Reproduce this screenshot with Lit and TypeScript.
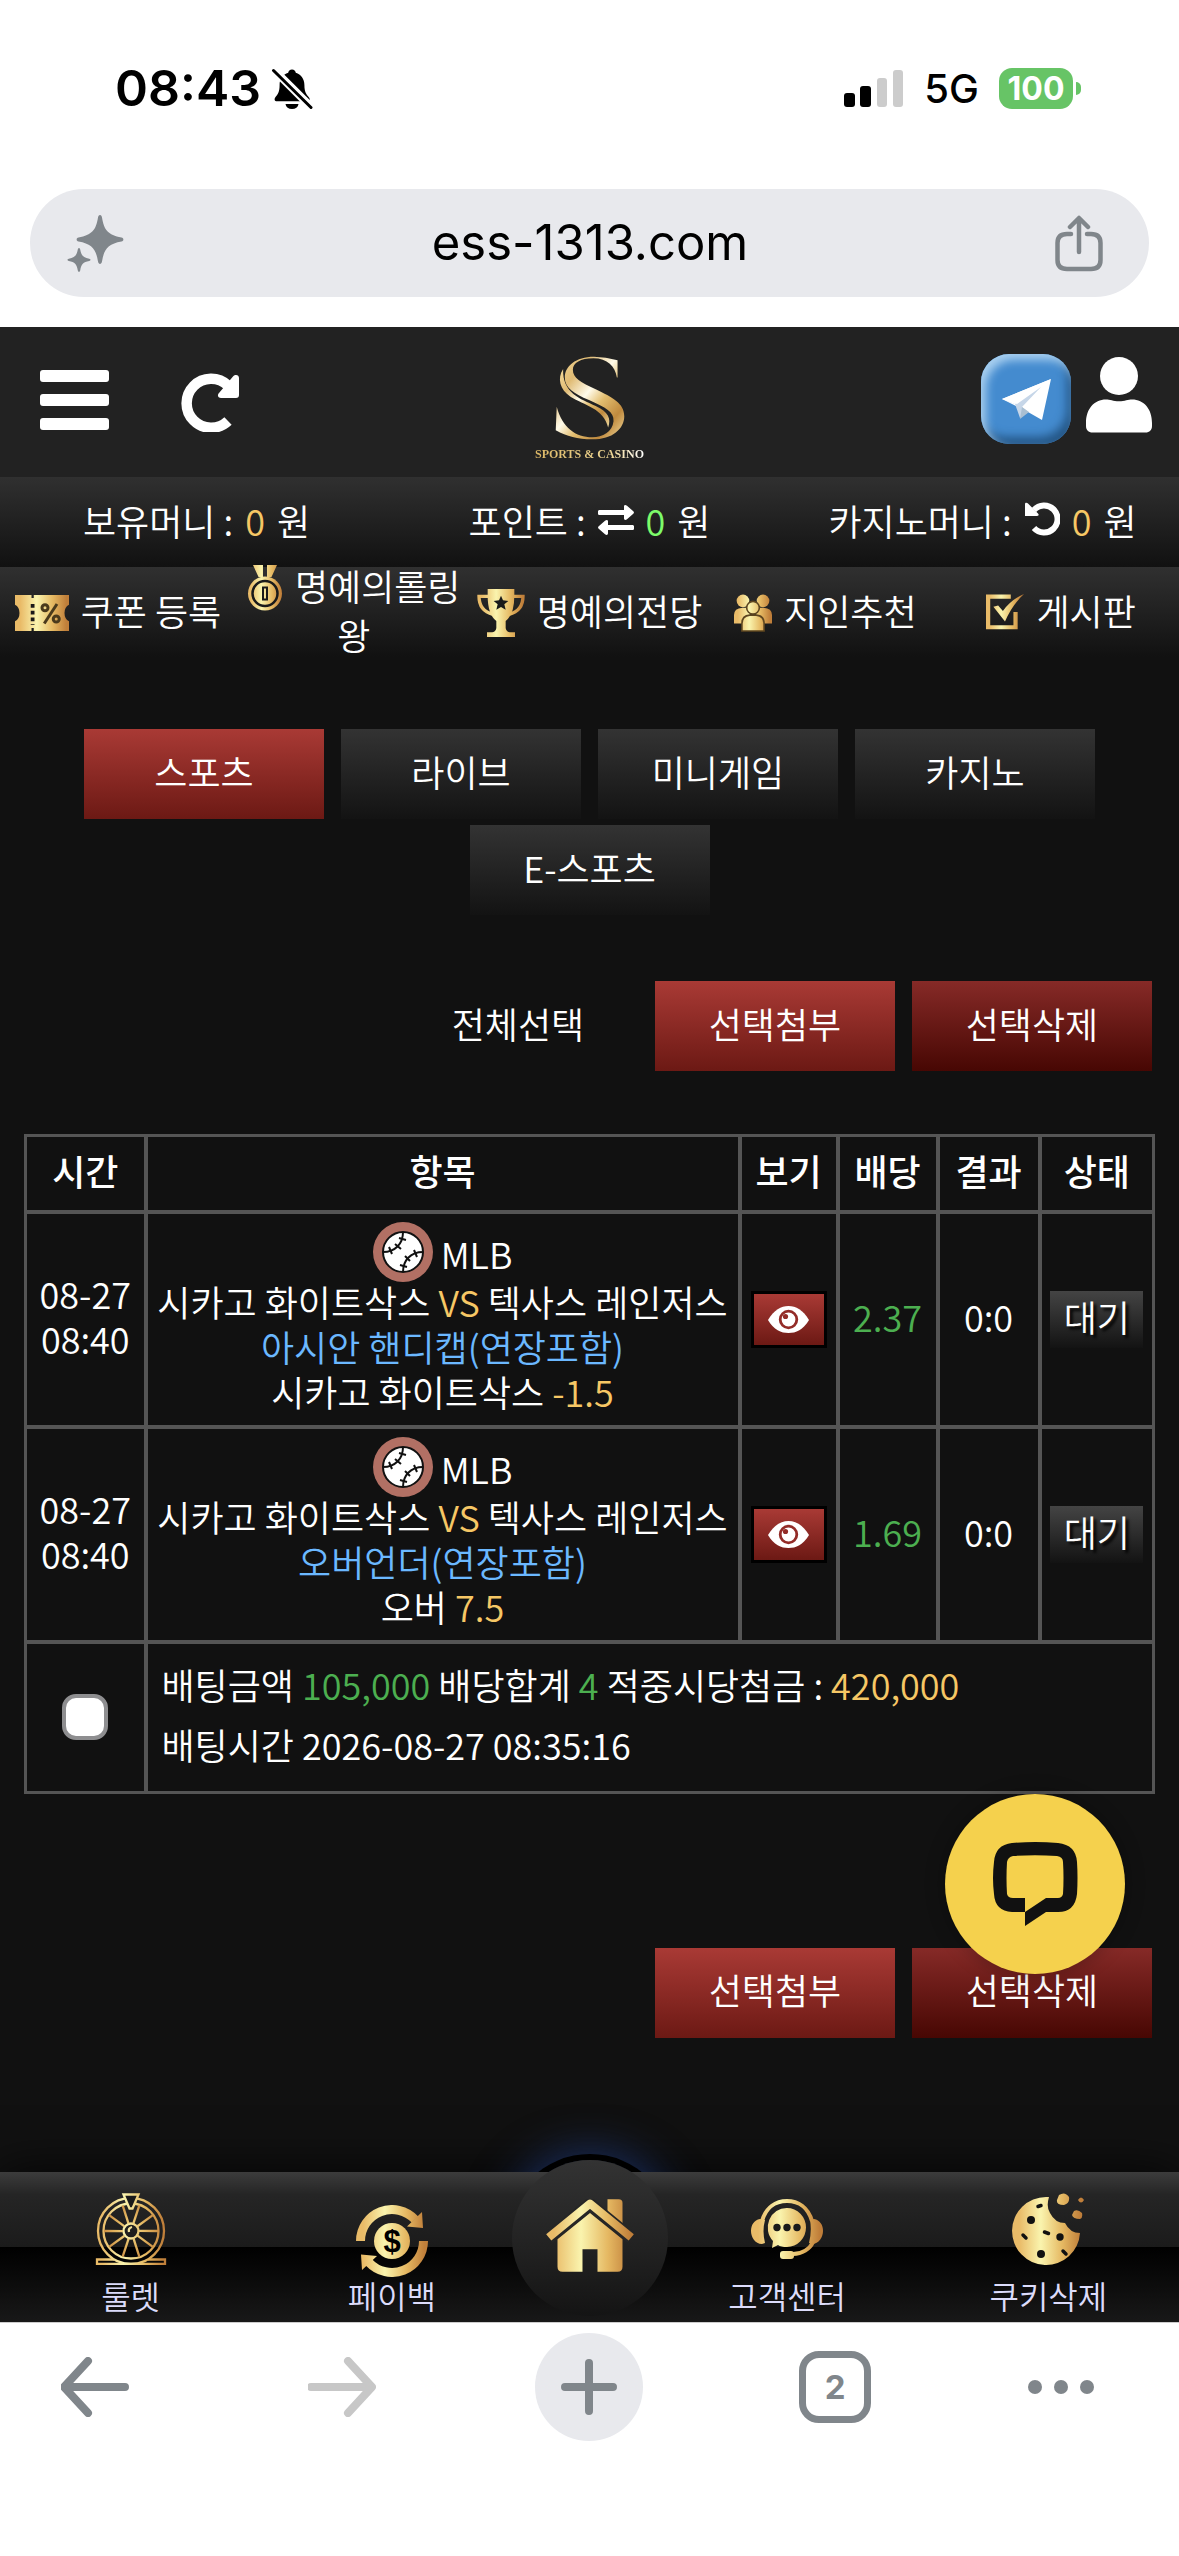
import { LitElement, html, svg, css } from "lit";
import { customElement, state } from "lit/decorators.js";
import { classMap } from "lit/directives/class-map.js";

const DARK = "#1a1a1a";

const icons = {
  bellOff: svg`
    <path d="M21 2.500c2.200 0 3.500 1.500 3.800 3.300 5.200 1.700 8.600 6.200 8.600 12.200 0 7 2 9.500 4.600 12.400.8 1 1 2.300.2 3.100-.4.500-1 .8-2 .8H5.800c-1.900 0-2.900-2-1.600-3.900 2.600-2.900 4.400-5.400 4.400-12.400 0-6 3.400-10.500 8.600-12.200.3-1.800 1.600-3.300 3.800-3.300z"/>
    <path d="M14.500 37h13c-.5 3.200-3 5-6.500 5s-6-1.800-6.500-5z"/>
    <path d="M3.500 3.500l36 36" stroke="#fff" stroke-width="8"/>
    <path d="M2.500 3.500l37.500 37" stroke="#000" stroke-width="3" stroke-linecap="round"/>`,
  sparkle: svg`
    <path d="M33 1c1.200 0 1.700 1 2 2.500 2 12.500 6 17.500 19.500 20 2.500.5 2.500 3.500 0 4-13.500 2.500-17.500 7.500-19.500 20-.5 3.300-3.500 3.300-4 0-2-12.500-6-17.500-19.500-20-2.500-.5-2.500-3.500 0-4 13.500-2.500 17.500-7.500 19.500-20 .3-1.500.8-2.500 2-2.500z"/>
    <path d="M12 34c.8 0 1 .8 1.200 1.500 1 6 3 8 9 9.200 1.800.4 1.800 1.900 0 2.300-6 1.200-8 3.200-9 9.500-.4 1.900-2 1.900-2.400 0-1-6.300-3-8.300-9-9.500-1.800-.4-1.800-1.900 0-2.300 6-1.200 8-3.200 9-9.200.2-.7.4-1.500 1.200-1.500z"/>`,
  share: svg`
    <path d="M16 19h-4c-6 0-9.500 3-9.500 9v17c0 6 3.500 9 9.500 9h24c6 0 9.500-3 9.500-9V28c0-6-3.500-9-9.500-9h-4M24 37V4M15 12l9-9 9 9"
      fill="none" stroke-width="4.500" stroke-linecap="round" stroke-linejoin="round"/>`,
  bars: svg`
    <rect width="69" height="12" y="0" rx="3"/>
    <rect width="69" height="12" y="24" rx="3"/>
    <rect width="69" height="12" y="48" rx="3"/>`,
  redo: svg`
    <path d="M47 49A24.500 24.500 0 1 1 47 13.500" fill="none" stroke="#fff" stroke-width="10.500"/>
    <path d="M58 6v17c0 2-1 3-3 3H40c-3 0-4-3-2-5L52 4.500c2.500-2.500 6-1.500 6 1.500z"/>`,
  undo: svg`
    <path d="M10 26A13.500 13.500 0 1 0 10 8" fill="none" stroke="#fff" stroke-width="6"/>
    <path d="M1 2v12h12c2 0 2-1.500 1-2.500L4 1.500C3 .5 1 .5 1 2z"/>`,
  exchange: svg`
    <path d="M2 6h24V2.500c0-2 1.500-2 3-.8l6 5.300c1.300 1.200 1.300 1.800 0 3l-6 5.200c-1.500 1.200-3 .8-3-1V11H2C.5 11 0 10.500 0 9.500v-2C0 6.500.5 6 2 6z"/>
    <path d="M34 21H10v-3.500c0-2-1.500-2-3-.8L1 22c-1.300 1.200-1.300 1.800 0 3l6 5.200c1.500 1.200 3 .8 3-1V26h24c1.500 0 2-.5 2-1.500v-2c0-1-.5-1.500-2-1.500z"/>`,
  user: svg`
    <circle cx="33" cy="19" r="19"/>
    <path d="M0 66c0-14 8-23.500 20-23.500 4 0 7 1.700 13 1.700s9-1.700 13-1.700c12 0 20 9.500 20 23.500v3c0 4-2.500 6.500-6.500 6.500h-53C2.500 75.500 0 73 0 69z"/>`,
  plane: svg`
    <path d="M1 20L50 0 41 41 27 33z" fill="#fff"/>
    <path d="M1 20L14 25 19 39 27 33 21 28 40 8 16 25z" fill="#c6d6e8"/>
    <path d="M1 20L50 0 14 25z" fill="#fff"/>
    <path d="M19 40l2-12 7 5z" fill="#a9bfd2"/>`,
  eye: svg`
    <path d="M0 14C6 4 13 0 20.500 0S35 4 41 14C35 24 28 27 20.500 27S6 24 0 14z" fill="#fff"/>
    <circle cx="20.500" cy="13.500" r="8.300" fill="none" stroke="#932c28" stroke-width="2.800"/>
    <circle cx="17.500" cy="10.500" r="2.600" fill="#932c28"/>`,
  baseball: svg`
    <circle cx="30" cy="30" r="30" fill="#b27064"/>
    <circle cx="30" cy="30" r="20" fill="#fff" stroke="#111" stroke-width="2"/>
    <g fill="none" stroke="#111" stroke-width="2">
      <path d="M30 10C30 22 22 30 10 30M50 30C38 30 30 38 30 50"/>
      <path d="M26 16l7 2M22 22l6 5M16 25l3 7M27 43l7 2M32 34l5 5M41 28l3 7"/>
    </g>`,
  chat: svg`
    <path fill-rule="evenodd" fill="#111" d="M19 1Q42 -1 65 1Q83 3 84 20Q85 36 84 52Q82 70 65 70H53L32 84V70H19Q2 69 1 52Q-1 36 1 20Q2 3 19 1zM20 14Q42 12.500 64 14Q70 15 70 20Q71 36 70 52Q69 56 65 56H53L32 70V56H20Q15 56 14 52Q13 36 14 20Q15 15 20 14z"/>`,
  back: svg`<path d="M64 30H4M27 4L3 30l24 26" fill="none" stroke-width="8" stroke-linecap="round" stroke-linejoin="round"/>`,
  forward: svg`<path d="M3 30h60M40 4l24 26-24 26" fill="none" stroke-width="8" stroke-linecap="round" stroke-linejoin="round"/>`,
  plus: svg`<path d="M28 4v48M4 28h48" fill="none" stroke-width="8" stroke-linecap="round"/>`,
  dots: svg`<circle cx="7" cy="7" r="7"/><circle cx="33" cy="7" r="7"/><circle cx="59" cy="7" r="7"/>`,
};

/* Gold artwork is always 72 units wide so that it can share one gradient. */
const gold = {
  ticket: svg`
    <path d="M0 0h22v4h3V0h47v13q-6 3-6 11t6 11v13H25v-4h-3v4H0V35q6-3 6-11T0 13z"/>
    <path d="M23.500 12v28" stroke="${DARK}" stroke-width="5" stroke-dasharray="5 4"/>
    <g fill="none" stroke="#4a3a1c" stroke-width="4"><circle cx="40" cy="17" r="4"/><circle cx="55" cy="32" r="4"/><path d="M56 12L39 38"/></g>`,
  medal: svg`
    <path d="M12 0h20v24h-9zM60 0H40v24h9z"/>
    <circle cx="36" cy="57" r="34"/>
    <circle cx="36" cy="57" r="25" fill="none" stroke="${DARK}" stroke-width="5"/>
    <path d="M32 45h8v24h-8z" fill="none" stroke="${DARK}" stroke-width="4"/>`,
  trophy: svg`
    <path d="M16 0h40v10q0 28-13 38v10q0 5 6 7h8v8H15v-8h8q6-2 6-7V48Q16 38 16 10z"/>
    <path d="M17 11H3q0 22 21 27M55 11h14q0 22-21 27" fill="none" stroke="url(#gold)" stroke-width="5"/>
    <path d="M36 10l3 7 8 1-6 5 2 8-7-4-7 4 2-8-6-5 8-1z" fill="${DARK}"/>`,
  people: svg`
    <circle cx="17" cy="13" r="12"/><circle cx="55" cy="13" r="12"/>
    <path d="M0 56V40q0-13 16-14l14 0v30zM72 56V40q0-13-16-14l-14 0v30z"/>
    <circle cx="36" cy="26" r="12" stroke="#5d451f" stroke-width="3"/>
    <path d="M15 70V56q0-15 15-16h12q15 1 15 16v14z" stroke="#5d451f" stroke-width="3"/>`,
  board: svg`
    <path d="M47 5H4v58h52V34" fill="none" stroke="url(#gold)" stroke-width="8"/>
    <path d="M14 24l9-2 9 10Q48 10 72 0 50 20 36 52z"/>`,
  wheel: svg`
    <g fill="none" stroke="url(#gold)" stroke-width="2.300">
      <circle cx="36" cy="38" r="33"/>
      <circle cx="36" cy="38" r="27.500"/>
      <circle cx="36" cy="38" r="7.500"/>
      <path d="M34 39q-1-4 3-5"/>
      ${[0, 36, 72, 108, 144, 180, 216, 252, 288, 324].map(
        deg => svg`<path d="M44 37.900L63 38" transform="rotate(${deg} 36 38)"/>`
      )}
      <path d="M19 66.500H2v4.500h68v-4.500H53"/>
      <path d="M28.500 1.500h15l-6 14h-3z" fill="${DARK}"/>
    </g>`,
  payback: svg`
    <g fill="none" stroke="url(#gold)" stroke-width="9">
      <path d="M4.500 36A31.500 31.500 0 0 1 59 14.500"/>
      <path d="M67.500 36A31.500 31.500 0 0 1 13 57.500"/>
    </g>
    <path d="M66 7l1 16-16-1.500zM6 65L5 49.500l16 1.500z"/>
    <circle cx="36" cy="36" r="18"/>
    <text x="36" y="47" text-anchor="middle" font-family="Liberation Sans" font-weight="700" font-size="31" fill="#000">$</text>`,
  home: svg`
    <path d="M50 0h9q3 0 3 3v20L50 13z"/>
    <path d="M3 31L36 4l33 27" fill="none" stroke="#262626" stroke-width="10"/>
    <path d="M10 32L36 11l26 21v22q0 4-4 4H42V40H30v18H14q-4 0-4-4z"/>
    <path d="M3 30.500L36 3.500l33 27" fill="none" stroke="url(#gold)" stroke-width="6.500" stroke-linejoin="round"/>`,
  support: svg`
    <path d="M11 22C15 8 25 2 36 2s21 6 25 20M62 43c-3 7-11 12-20 12" fill="none" stroke="url(#gold)" stroke-width="4"/>
    <path d="M9 20C3 21 0 26 0 32s4 13 11 13l3-1q-3-12 0-23zM63 20c6 1 9 6 9 12s-4 13-11 13l-3-1q3-12 1-23z"/>
    <path d="M36 9a19 19.500 0 0 1 0 39q-6 0-9-2l-6 3 1-7A19 19.500 0 0 1 36 9z"/>
    <rect x="29" y="52" width="14" height="8" rx="3"/>
    <g fill="${DARK}"><circle cx="26" cy="28.500" r="3.700"/><circle cx="36" cy="28.500" r="3.700"/><circle cx="46" cy="28.500" r="3.700"/></g>`,
  cookie: svg`
    <path d="M37 4Q34 14 38 20Q43 30 53 30Q58 40 68 40A34 34 0 1 1 34 4z"/>
    <path d="M47 2q6-4 10 2 1 6-5 8-8 0-7-5zM62 18q4-2 8 2 1 5-2 6-7 0-8-4zM66 7q3-5 6 0-3 5-6 0z"/>
    <g fill="#111"><circle cx="19" cy="27" r="4"/><circle cx="48" cy="44" r="3.700"/><circle cx="29" cy="61" r="4"/></g>
    <path d="M26 13.500l3-1M11 42l3 3M32.500 39l4 1.500M51 58l3 3" stroke="#111" stroke-width="3.500" stroke-linecap="round"/>`,
};

const icon = (name: keyof typeof icons, width: number, height: number) =>
  html`<svg class="icon" width=${width} height=${height} viewBox="0 0 ${width} ${height}" aria-hidden="true">${icons[name]}</svg>`;

const goldIcon = (name: keyof typeof gold, width: number, height: number) =>
  html`<svg class="gold" width=${width} height=${height} viewBox="0 0 72 ${Math.round((72 * height) / width)}" aria-hidden="true">${gold[name]}</svg>`;

const TABS = ["스포츠", "라이브", "미니게임", "카지노", "E-스포츠"];

const SHORTCUTS = [
  { label: "쿠폰 등록", icon: goldIcon("ticket", 54, 36) },
  { label: "명예의롤링왕", icon: goldIcon("medal", 36, 46) },
  { label: "명예의전당", icon: goldIcon("trophy", 48, 48) },
  { label: "지인추천", icon: goldIcon("people", 38, 38) },
  { label: "게시판", icon: goldIcon("board", 38, 38) },
];

const BETS = [
  { day: "08-27", time: "08:40", league: "MLB", home: "시카고 화이트삭스", away: "텍사스 레인저스", market: "아시안 핸디캡(연장포함)", pick: "시카고 화이트삭스", line: "-1.5", odds: "2.37", score: "0:0", status: "대기" },
  { day: "08-27", time: "08:40", league: "MLB", home: "시카고 화이트삭스", away: "텍사스 레인저스", market: "오버언더(연장포함)", pick: "오버", line: "7.5", odds: "1.69", score: "0:0", status: "대기" },
];

@customElement("app-root")
class AppRoot extends LitElement {
  @state() private tab = TABS[0];

  static styles = css`
    :host {
      display: flex;
      flex-direction: column;
      min-height: 100vh;
      background: #111;
      color: #fff;
      font-family: "Noto Sans CJK KR", sans-serif;
      font-size: 36px;
      font-weight: 350;
      line-height: 45px;
    }
    * { box-sizing: border-box; }
    svg { display: block; flex: none; }
    a { color: inherit; text-decoration: none; }
    button {
      display: flex;
      align-items: center;
      justify-content: center;
      padding: 0;
      border: 0;
      background: none;
      color: inherit;
      font: inherit;
      cursor: pointer;
    }
    .icon { fill: currentColor; stroke: none; }
    .gold { fill: url(#gold); }
    .defs { position: absolute; }
    .yellow { color: #f6c765; }
    .lime { color: #7dfb6a; }
    .green { color: #4caf50; }
    .blue { color: #6bb8ff; }

    .status {
      display: flex;
      justify-content: space-between;
      align-items: center;
      height: 177px;
      padding: 0 98px 0 115px;
      background: #fff;
      color: #000;
      font-family: Inter, sans-serif;
    }
    .clock { display: flex; align-items: center; gap: 10px; font-size: 50px; font-weight: 600; }
    .signals { display: flex; align-items: center; gap: 20px; font-size: 40px; font-weight: 500; }
    .battery { display: flex; align-items: center; gap: 3px; }
    .level {
      width: 74px;
      border-radius: 13px;
      background: #67c466;
      color: #fff;
      font-size: 32px;
      font-weight: 700;
      line-height: 41px;
      text-align: center;
    }
    .tip { width: 5px; height: 13px; border-radius: 0 5px 5px 0; background: #67c466; }

    .address { padding: 12px 30px 30px; background: #fff; color: #80868b; }
    .field {
      display: flex;
      align-items: center;
      height: 108px;
      padding: 0 46px 0 37px;
      border-radius: 54px;
      background: #e8e9ed;
    }
    .field .share .icon { stroke: currentColor; }
    .field input {
      flex: 1;
      min-width: 0;
      border: 0;
      outline: 0;
      background: none;
      color: #000;
      font: 400 49px/60px Inter, sans-serif;
      text-align: center;
    }

    .header {
      display: grid;
      grid-template-columns: 1fr auto 1fr;
      align-items: center;
      height: 150px;
      padding: 0 27px;
      background: #222;
    }
    .side { display: flex; align-items: center; gap: 72px; padding-left: 13px; }
    .side.end { justify-content: flex-end; gap: 15px; }
    .menu { margin-bottom: 4px; }
    .logo {
      display: flex;
      flex-direction: column;
      align-items: center;
      gap: 6px;
      padding-top: 14px;
    }
    .brand {
      background: linear-gradient(90deg, #dbb765, #efd795 70%, #fff);
      background-clip: text;
      -webkit-background-clip: text;
      color: transparent;
      font: 700 12px/16px "Liberation Serif", serif;
      white-space: nowrap;
    }
    .telegram {
      width: 90px;
      height: 90px;
      margin-bottom: 6px;
      border-radius: 28px;
      background: #448bcf;
      box-shadow: inset 5px 6px 10px #a9d0f0, inset -4px -7px 10px #245686;
    }
    .user { margin-bottom: 15px; }

    .money, .shortcuts {
      display: flex;
      height: 90px;
      background: linear-gradient(#303030, #111);
    }
    .balance {
      flex: 1;
      display: flex;
      align-items: center;
      justify-content: center;
      gap: 12px;
      padding-bottom: 4px;
    }
    .shortcuts { align-items: center; padding-bottom: 4px; }
    .shortcuts a { flex: 1; line-height: 49px; text-align: center; }
    .shortcuts .gold { display: inline-block; margin: -13px 12px -7px 0; vertical-align: middle; }

    .content { position: relative; flex: 1; padding: 72px 24px; }
    .tabs { display: flex; flex-wrap: wrap; justify-content: center; gap: 6px 17px; padding: 0 12px; }
    .button {
      width: 240px;
      height: 90px;
      padding-bottom: 6px;
      background: linear-gradient(#333, #131313);
    }
    .button.red { background: linear-gradient(#a93a35, #6c1914); }
    .button.maroon { background: linear-gradient(#862a27, #470703); }
    .button.plain { background: none; }
    .actions { display: flex; justify-content: flex-end; gap: 17px; margin: 66px 3px 63px; }
    .actions.bottom { margin-top: 154px; margin-bottom: 0; }

    table { width: 100%; border-collapse: collapse; }
    th, td { border: 4px solid #555; padding: 0 0 6px; text-align: center; }
    th { height: 76px; border-top-width: 3px; font-weight: 500; }
    tr > :first-child { border-left-width: 3px; }
    tr > :last-child { border-right-width: 3px; }
    tr:last-child > td { border-bottom-width: 3px; }
    .col-time { width: 120px; }
    .col-view { width: 98px; }
    .col-odds { width: 100px; }
    .col-score { width: 102px; }
    .col-state { width: 114px; }
    td.flat { padding: 0; }
    td.match { padding: 8px 0 11px; }
    .league { display: flex; justify-content: center; gap: 8px; height: 57px; line-height: 62px; }
    .view {
      width: 76px;
      height: 57px;
      margin: 0 auto;
      border: 3px solid #000;
      background: linear-gradient(#a93a35, #6c1914);
    }
    .badge {
      display: block;
      width: 93px;
      margin: 0 auto;
      padding-bottom: 6px;
      background: linear-gradient(#444, #131313);
      line-height: 51px;
      text-shadow: 3px 3px 3px #000;
    }
    td.summary { padding: 10px 14px 17px; line-height: 60px; text-align: left; }
    .check {
      display: block;
      appearance: none;
      width: 46px;
      height: 46px;
      margin: 0 auto;
      border: 4px solid #8e8e90;
      border-radius: 14px;
      background: #fff;
    }
    .check:checked { background: #448bcf; }
    .chat {
      position: absolute;
      right: 54px;
      bottom: 198px;
      width: 180px;
      height: 180px;
      border-radius: 50%;
      background: #f5d14d;
      box-shadow: 0 0 20px rgba(0, 0, 0, 0.3);
    }

    .dock { position: relative; color: #dcdcfb; font-size: 32px; }
    .dock-bar {
      position: relative;
      display: flex;
      height: 150px;
      background: linear-gradient(#3c3c3c, #252525 15%, #1b1b1b 50%, #000 50%, #181818);
    }
    .shade {
      position: absolute;
      inset: 0;
      box-shadow: 0 0 45px rgba(0, 0, 0, 0.8);
    }
    .glow {
      position: absolute;
      top: -12px;
      left: 50%;
      width: 156px;
      height: 156px;
      margin-left: -78px;
      border-radius: 50%;
      box-shadow: 0 0 0 6px #000, 0 0 40px 10px #1a2d5c;
    }
    .dock-bar a {
      flex: 1;
      display: flex;
      flex-direction: column;
      align-items: center;
      justify-content: space-between;
      padding: 21px 0 5px;
      line-height: 44px;
    }
    .art { display: flex; align-items: center; height: 72px; }
    .art.low { padding-top: 24px; }
    .dock-bar .home {
      flex: none;
      justify-content: center;
      width: 156px;
      height: 156px;
      margin: -12px -11px 0;
      padding: 21px 0 26px;
      border-radius: 50%;
      background: linear-gradient(#333, #141414);
    }

    .toolbar {
      position: relative;
      display: flex;
      justify-content: space-between;
      height: 234px;
      padding: 10px 85px 0 41px;
      border-top: 1px solid #ccc;
      background: #fff;
      color: #80868b;
    }
    .toolbar button { width: 108px; height: 108px; border-radius: 50%; }
    .toolbar .icon { stroke: currentColor; }
    .toolbar .off { color: #c7c7c7; }
    .toolbar .new { background: #e8e9ed; }
    .toolbar .more { width: 66px; }
    .toolbar .more .icon { stroke: none; }
    .count {
      width: 72px;
      border: 7px solid #80868b;
      border-radius: 20px;
      font: 700 33px/58px Inter, sans-serif;
    }
  `;

  render() {
    return html`
      <svg class="defs" width="0" height="0" aria-hidden="true">
        <defs>
          <linearGradient id="gold" gradientUnits="userSpaceOnUse" x1="0" y1="0" x2="72" y2="0">
            <stop offset="0.100" stop-color="#e9bb68"/>
            <stop offset="0.400" stop-color="#faf4ae"/>
            <stop offset="0.700" stop-color="#e5b862"/>
            <stop offset="0.950" stop-color="#c07f3a"/>
          </linearGradient>
          <linearGradient id="emblem" x1="0" y1="0" x2="1" y2="1">
            <stop offset="0" stop-color="#f3d99a"/>
            <stop offset="0.250" stop-color="#e0bb74"/>
            <stop offset="0.450" stop-color="#fffbea"/>
            <stop offset="0.600" stop-color="#e3be70"/>
            <stop offset="0.800" stop-color="#c08a3e"/>
            <stop offset="1" stop-color="#f2dda2"/>
          </linearGradient>
        </defs>
      </svg>
      ${this.renderStatus()}
      ${this.renderHeader()}
      <main class="content">
        <div class="tabs">
          ${TABS.map(name => html`
            <button class=${classMap({ button: true, red: name === this.tab })} @click=${() => (this.tab = name)}>${name}</button>`)}
        </div>
        <div class="actions">
          <button class="button plain">전체선택</button>
          <button class="button red">선택첨부</button>
          <button class="button maroon">선택삭제</button>
        </div>
        ${this.renderTable()}
        <div class="actions bottom">
          <button class="button red">선택첨부</button>
          <button class="button maroon">선택삭제</button>
        </div>
        <button class="chat" aria-label="채팅">${icon("chat", 85, 84)}</button>
      </main>
      ${this.renderDock()}
    `;
  }

  private renderStatus() {
    return html`
      <div class="status">
        <div class="clock"><span>08:43</span>${icon("bellOff", 42, 43)}</div>
        <div class="signals">
          <svg width="60" height="38" viewBox="0 0 60 38" aria-hidden="true">
            <rect y="23" width="11" height="14" rx="3"/>
            <rect x="16" y="16" width="11" height="21" rx="3"/>
            <rect x="33" y="8" width="10" height="29" rx="3" fill="#ccc"/>
            <rect x="49" width="10" height="37" rx="3" fill="#ccc"/>
          </svg>
          <span>5G</span>
          <div class="battery"><div class="level">100</div><div class="tip"></div></div>
        </div>
      </div>
      <div class="address">
        <div class="field">
          <button aria-label="AI">${icon("sparkle", 58, 58)}</button>
          <input type="text" value="ess-1313.com" aria-label="주소">
          <button class="share" aria-label="공유">${icon("share", 48, 57)}</button>
        </div>
      </div>
    `;
  }

  private renderHeader() {
    return html`
      <header class="header">
        <div class="side">
          <button class="menu" aria-label="메뉴">${icon("bars", 69, 60)}</button>
          <button aria-label="새로고침">${icon("redo", 60, 60)}</button>
        </div>
        <a class="logo" href="#">
          <svg width="70" height="84" viewBox="104 49 208 250" aria-hidden="true" fill="url(#emblem)">
            <path d="M290 62Q255 51 220 51C165 51 133 80 133 112C133 145 160 160 205 180C255 203 280 215 278 243C275 275 245 291 215 291C165 291 125 262 109 200L106 270C140 288 170 297 215 297C275 297 310 265 310 228C310 190 275 172 225 148C180 127 157 115 157 90C157 70 180 56 218 56C260 56 283 80 288 113L290 113Z"/>
            <path d="M128 88C110 115 118 150 150 170C190 195 250 205 262 262C272 235 262 215 225 198C180 177 125 160 128 88Z"/>
          </svg>
          <span class="brand">SPORTS &amp; CASINO</span>
        </a>
        <div class="side end">
          <button class="telegram" aria-label="텔레그램">${icon("plane", 50, 41)}</button>
          <button class="user" aria-label="내 정보">${icon("user", 66, 76)}</button>
        </div>
      </header>
      <div class="money">
        <div class="balance"><span>보유머니 :</span><span class="yellow">0</span><span>원</span></div>
        <div class="balance">
          <span>포인트 :</span><button aria-label="전환">${icon("exchange", 36, 32)}</button><span class="lime">0</span><span>원</span>
        </div>
        <div class="balance">
          <span>카지노머니 :</span><button aria-label="회수">${icon("undo", 36, 36)}</button><span class="yellow">0</span><span>원</span>
        </div>
      </div>
      <nav class="shortcuts">
        ${SHORTCUTS.map(item => html`<a href="#">${item.icon}${item.label}</a>`)}
      </nav>
    `;
  }

  private renderTable() {
    return html`
      <table>
        <thead>
          <tr>
            <th class="col-time">시간</th>
            <th>항목</th>
            <th class="col-view">보기</th>
            <th class="col-odds">배당</th>
            <th class="col-score">결과</th>
            <th class="col-state">상태</th>
          </tr>
        </thead>
        <tbody>
          ${BETS.map(bet => html`
            <tr>
              <td>${bet.day}<br>${bet.time}</td>
              <td class="match">
                <div class="league">${icon("baseball", 60, 60)}<span>${bet.league}</span></div>
                <div>${bet.home} <span class="yellow">VS</span> ${bet.away}</div>
                <div class="blue">${bet.market}</div>
                <div>${bet.pick} <span class="yellow">${bet.line}</span></div>
              </td>
              <td class="flat"><button class="view" aria-label="보기">${icon("eye", 41, 27)}</button></td>
              <td class="green">${bet.odds}</td>
              <td>${bet.score}</td>
              <td class="flat"><span class="badge">${bet.status}</span></td>
            </tr>`)}
          <tr>
            <td class="flat"><input class="check" type="checkbox" aria-label="선택"></td>
            <td class="summary" colspan="5">
              <div>배팅금액 <span class="green">105,000</span> 배당합계 <span class="green">4</span> 적중시당첨금 : <span class="yellow">420,000</span></div>
              <div>배팅시간 2026-08-27 08:35:16</div>
            </td>
          </tr>
        </tbody>
      </table>
    `;
  }

  private renderDock() {
    return html`
      <nav class="dock">
        <div class="shade"></div>
        <div class="glow"></div>
        <div class="dock-bar">
          <a href="#"><span class="art">${goldIcon("wheel", 72, 72)}</span>룰렛</a>
          <a href="#"><span class="art low">${goldIcon("payback", 72, 72)}</span>페이백</a>
          <a class="home" href="#" aria-label="홈">${goldIcon("home", 90, 73)}</a>
          <a href="#"><span class="art">${goldIcon("support", 72, 60)}</span>고객센터</a>
          <a href="#"><span class="art">${goldIcon("cookie", 72, 72)}</span>쿠키삭제</a>
        </div>
      </nav>
      <div class="toolbar">
        <button aria-label="뒤로">${icon("back", 68, 60)}</button>
        <button class="off" aria-label="앞으로">${icon("forward", 68, 60)}</button>
        <button class="new" aria-label="새 탭">${icon("plus", 56, 56)}</button>
        <button aria-label="탭"><span class="count">2</span></button>
        <button class="more" aria-label="더보기">${icon("dots", 66, 14)}</button>
      </div>
    `;
  }
}

export { AppRoot };
